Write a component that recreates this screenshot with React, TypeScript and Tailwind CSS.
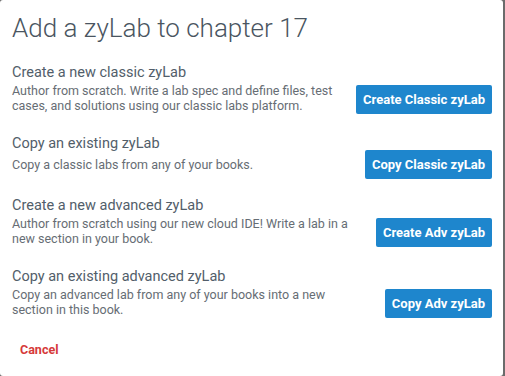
import React from "react";

type Item = { title: string; desc: string; button: string; gap: string; descGap: string };

const items: Item[] = [
  {
    title: "Create a new classic zyLab",
    desc: "Author from scratch. Write a lab spec and define files, test cases, and solutions using our classic labs platform.",
    button: "Create Classic zyLab",
    gap: "mt-[19px]",
    descGap: "mt-0",
  },
  {
    title: "Copy an existing zyLab",
    desc: "Copy a classic labs from any of your books.",
    button: "Copy Classic zyLab",
    gap: "mt-[21px]",
    descGap: "mt-[3px]",
  },
  {
    title: "Create a new advanced zyLab",
    desc: "Author from scratch using our new cloud IDE! Write a lab in a new section in your book.",
    button: "Create Adv zyLab",
    gap: "mt-[24px]",
    descGap: "mt-0",
  },
  {
    title: "Copy an existing advanced zyLab",
    desc: "Copy an advanced lab from any of your books into a new section in this book.",
    button: "Copy Adv zyLab",
    gap: "mt-[21px]",
    descGap: "mt-0",
  },
];

export default function App() {
  return (
    <div
      className="flex h-[376px] w-[505px] overflow-hidden bg-[#6b6b6b]"
      style={{ fontFamily: "Roboto, 'Liberation Sans', sans-serif" }}
    >
      <div className="flex h-full w-[503px] flex-col rounded-[3px] bg-white pl-3 pr-[11px]">
        <h1 className="mt-[12px] text-[26px] font-light leading-[32px] text-[#4a5561]">
          Add a zyLab to chapter 17
        </h1>
        {items.map((it) => (
          <div key={it.title} className={`${it.gap} flex items-center justify-between`}>
            <div className="w-[340px]">
              <div className="text-[14.5px] leading-[20px] text-[#525e6a]">{it.title}</div>
              <div className={`${it.descGap} text-[12.5px] leading-[15px] text-[#666d74]`}>{it.desc}</div>
            </div>
            <button className="translate-y-[11px] rounded-[2px] bg-[#1e86cd] px-[7px] text-[13px] font-bold leading-[29px] text-white">
              {it.button}
            </button>
          </div>
        ))}
        <div className="mt-[20px] pl-2">
          <span className="text-[12.5px] font-bold leading-[16px] text-[#d63a3a]">Cancel</span>
        </div>
      </div>
    </div>
  );
}
